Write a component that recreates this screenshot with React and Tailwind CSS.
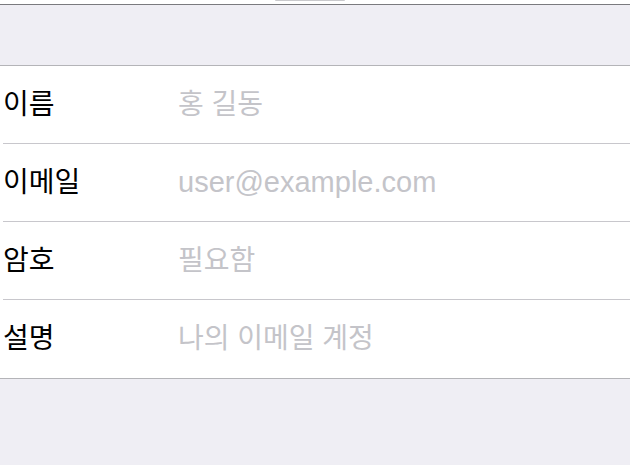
import React from 'react';

const rows = [
  { label: '이름', placeholder: '홍 길동' },
  { label: '이메일', placeholder: 'user@example.com', latin: true },
  { label: '암호', placeholder: '필요함' },
  { label: '설명', placeholder: '나의 이메일 계정' },
];

export default function App() {
  return (
    <div
      className="relative w-[630px] h-[465px] overflow-hidden bg-[#efeef4]"
      style={{ fontFamily: '"Liberation Sans", "Noto Sans CJK KR", sans-serif' }}
    >
      {/* top edge */}
      <div className="h-[4px] bg-white" />
      <div className="h-px bg-[#7a7a7e]" />
      <div className="absolute left-[275px] top-0 w-[70px] h-[1px] rounded-b bg-[#c9c9cc]" />

      <div className="h-[60px]" />

      {/* form group */}
      <div className="bg-white border-y border-[#b4b4b8]">
        {rows.map((row, i) => (
          <div key={row.label} className="pl-[3px]">
            <div
              className={`flex items-center h-[78px] ${i < rows.length - 1 ? 'border-b border-[#c8c7cc]' : ''}`}
            >
              <span className="w-[175px] text-[28px] text-black leading-none">{row.label}</span>
              <span className={`${row.latin ? 'text-[29px]' : 'text-[28px]'} text-[#c4c4c9] leading-none`}>
                {row.placeholder}
              </span>
            </div>
          </div>
        ))}
      </div>
    </div>
  );
}
